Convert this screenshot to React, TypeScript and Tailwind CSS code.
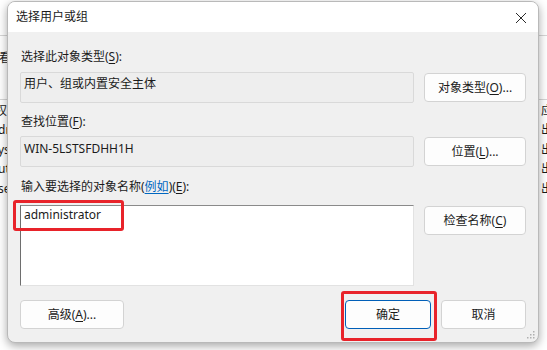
import React from "react";

const F = { fontFamily: '"Noto Sans", "Noto Sans CJK SC", sans-serif' };

function Btn({ children, w, primary }: { children: React.ReactNode; w: string; primary?: boolean }) {
  return (
    <div
      className={`${w} h-[29px] flex items-center justify-center rounded-[4px] text-[12px] text-[#1b1b1b] ${
        primary ? "border border-[#005fb8] bg-[#fdfdfd]" : "border border-[#d3d3d3] bg-[#fdfdfd]"
      }`}
    >
      {children}
    </div>
  );
}

function U({ children }: { children: React.ReactNode }) {
  return <span className="underline underline-offset-[2px] decoration-[1px]">{children}</span>;
}

export default function App() {
  const leftFrag = [
    ["权", "-ml-[5px]"],
    ["dr", "-ml-[2px]"],
    ["ys", "-ml-[2px]"],
    ["ut", "-ml-[2px]"],
    ["se", "-ml-[2px]"],
  ];
  return (
    <div className="relative w-[547px] h-[350px] overflow-hidden bg-white text-[#1b1b1b]" style={F}>
      {/* background window */}
      <div className="flex flex-col text-[12px]">
        <div className="h-[36px] border-b border-[#d6d6d6]" />
        <div className="h-[64px] border-b border-[#d6d6d6] flex items-start pt-[13px]">
          <span className="-ml-[13px]">查看</span>
        </div>
        <div className="flex flex-col pt-[1px]">
          {leftFrag.map(([t, m], i) => (
            <div key={i} className="h-[19.5px] flex items-center justify-between">
              <span className={m}>{t}</span>
              <span className="mr-[-6px]">{i === 0 ? "应" : "出"}</span>
            </div>
          ))}
        </div>
      </div>

      {/* dialog */}
      <div className="absolute left-[7px] top-[1px] w-[532px] h-[342px] rounded-[8px] border border-[#b9b9b9] bg-[#f0f0f0] shadow-[0_3px_10px_rgba(0,0,0,0.35)] overflow-hidden flex flex-col">
        <div className="h-[30px] bg-white flex items-center justify-between pl-[8px] pr-[8px] shrink-0">
          <span className="text-[12px] text-[#1b1b1b]">选择用户或组</span>
          <svg width="12" height="12" viewBox="0 0 12 12" className="mr-[3px] mt-[1px]">
            <path d="M1 1 L11 11 M11 1 L1 11" stroke="#2b2b2b" strokeWidth="1" fill="none" />
          </svg>
        </div>
        <div className="flex-1 flex flex-col px-[12px] pt-[17px] text-[12px] relative">
          <div className="h-[16px] leading-[16px] ml-[1px]">
            选择此对象类型(<U>S</U>):
          </div>
          <div className="flex gap-[10px] mt-[7px] items-start">
            <div className="w-[394px] h-[31px] border border-[#d9d9d9] bg-[#eeeeee] rounded-[2px] pl-[3px] pt-[3px] leading-[16px]">
              用户、组或内置安全主体
            </div>
            <div className="mt-[1px]">
              <Btn w="w-[102px]">
                对象类型(<U>O</U>)...
              </Btn>
            </div>
          </div>
          <div className="h-[16px] leading-[16px] ml-[1px] mt-[11px]">
            查找位置(<U>F</U>):
          </div>
          <div className="flex gap-[10px] mt-[6px] items-start">
            <div className="w-[394px] h-[31px] border border-[#d9d9d9] bg-[#eeeeee] rounded-[2px] pl-[3px] pt-[4px] leading-[16px]">
              WIN-5LSTSFDHH1H
            </div>
            <div className="mt-[1px]">
              <Btn w="w-[102px]">
                位置(<U>L</U>)...
              </Btn>
            </div>
          </div>
          <div className="h-[16px] leading-[16px] ml-[1px] mt-[12px]">
            输入要选择的对象名称(<span className="text-[#0067c0] underline underline-offset-[2px]">例如</span>)(<U>E</U>):
          </div>
          <div className="flex gap-[10px] mt-[10px] items-start">
            <div className="w-[394px] h-[81px] bg-white border border-[#e2e2e2] border-l-[#6e6e6e] border-t-[#8a8a8a] pl-[3px] pt-[1px] leading-[16px]">
              administrator
            </div>
            <div className="mt-[1px]">
              <Btn w="w-[102px]">
                检查名称(<U>C</U>)
              </Btn>
            </div>
          </div>
          <div className="flex justify-between mt-[14px]">
            <Btn w="w-[104px]">
              高级(<U>A</U>)...
            </Btn>
            <div className="flex gap-[10px]">
              <Btn w="w-[86px]" primary>
                确定
              </Btn>
              <Btn w="w-[85px]">取消</Btn>
            </div>
          </div>
          <svg width="8" height="8" viewBox="0 0 8 8" className="absolute right-[3px] bottom-[3px]">
            <g fill="#b0b0b0">
              <rect x="6" y="0" width="1.5" height="1.5" />
              <rect x="3" y="3" width="1.5" height="1.5" />
              <rect x="6" y="3" width="1.5" height="1.5" />
              <rect x="0" y="6" width="1.5" height="1.5" />
              <rect x="3" y="6" width="1.5" height="1.5" />
              <rect x="6" y="6" width="1.5" height="1.5" />
            </g>
          </svg>
        </div>
      </div>

      {/* red annotations */}
      <div className="absolute left-[13px] top-[200px] w-[111px] h-[31px] border-[3px] border-[#e8232a] rounded-[3px]" />
      <div className="absolute left-[341px] top-[291px] w-[96px] h-[50px] border-[3px] border-[#e8232a] rounded-[3px]" />
    </div>
  );
}
